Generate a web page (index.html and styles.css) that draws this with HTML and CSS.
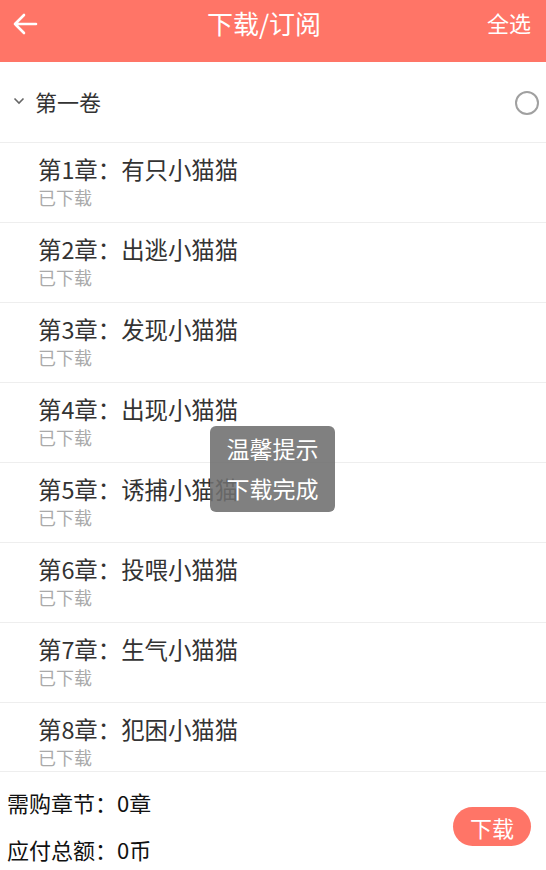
FILE: index.html
```html
<!DOCTYPE html>
<html lang="zh">
<head>
<meta charset="utf-8">
<title>下载/订阅</title>
<link rel="stylesheet" href="styles.css">
</head>
<body>
<div class="app">
  <header class="topbar">
    <svg class="back" width="26" height="22" viewBox="0 0 26 22"><path d="M24 11H3M12 2L3 11l9 9" fill="none" stroke="#fff" stroke-width="2.6" stroke-linecap="round" stroke-linejoin="round"/></svg>
    <h1 class="title">下载/订阅</h1>
    <span class="select-all">全选</span>
  </header>
  <main class="list">
    <div class="volume">
      <svg class="chev" width="12" height="8" viewBox="0 0 12 8"><path d="M1.5 1.5L6 6l4.5-4.5" fill="none" stroke="#666" stroke-width="1.6"/></svg>
      <span class="volume-name">第一卷</span>
      <span class="radio"></span>
    </div>
    <div class="chapter"><div class="ch-title">第1章：有只小猫猫</div><div class="ch-state">已下载</div></div>
    <div class="chapter"><div class="ch-title">第2章：出逃小猫猫</div><div class="ch-state">已下载</div></div>
    <div class="chapter"><div class="ch-title">第3章：发现小猫猫</div><div class="ch-state">已下载</div></div>
    <div class="chapter"><div class="ch-title">第4章：出现小猫猫</div><div class="ch-state">已下载</div></div>
    <div class="chapter"><div class="ch-title">第5章：诱捕小猫猫</div><div class="ch-state">已下载</div></div>
    <div class="chapter"><div class="ch-title">第6章：投喂小猫猫</div><div class="ch-state">已下载</div></div>
    <div class="chapter"><div class="ch-title">第7章：生气小猫猫</div><div class="ch-state">已下载</div></div>
    <div class="chapter"><div class="ch-title">第8章：犯困小猫猫</div><div class="ch-state">已下载</div></div>
  </main>
  <footer class="footer">
    <div class="totals">
      <div class="line">需购章节：0章</div>
      <div class="line">应付总额：0币</div>
    </div>
    <button class="dl-btn">下载</button>
  </footer>
  <div class="toast">
    <div>温馨提示</div>
    <div>下载完成</div>
  </div>
</div>
</body>
</html>
```
FILE: styles.css
```css
* { box-sizing: border-box; }
html, body { margin: 0; padding: 0; }
body {
  width: 546px;
  height: 870px;
  overflow: hidden;
  background: #fff;
  font-family: "Noto Sans CJK SC", "Noto Sans", sans-serif;
  color: #333;
}
.app {
  position: relative;
  height: 870px;
  display: flex;
  flex-direction: column;
}
.topbar {
  height: 62px;
  flex: 0 0 62px;
  background: #ff7567;
  display: flex;
  align-items: center;
  justify-content: space-between;
  padding: 0 15px 0 12px;
  position: relative;
}
.back { display: block; margin-top: -14px; }
.title {
  position: absolute;
  left: 0; right: 18px;
  margin: 0;
  text-align: center;
  color: #fff;
  font-size: 26px;
  font-weight: normal;
  line-height: 62px;
  top: -8px;
  pointer-events: none;
}
.select-all {
  color: #fff;
  font-size: 22px;
  margin-top: -18px;
}
.list {
  flex: 1 1 auto;
  min-height: 0;
  overflow: hidden;
}
.volume {
  height: 81px;
  border-bottom: 1px solid #eee;
  display: flex;
  align-items: center;
  padding: 0 7px 0 13px;
}
.chev { display: block; margin-top: -2px; }
.volume-name {
  font-size: 22px;
  margin-left: 10px;
  flex: 1;
  color: #333;
  margin-top: -2px;
}
.radio {
  width: 24px;
  height: 24px;
  border: 2px solid #a0a0a0;
  border-radius: 50%;
  margin-top: 1px;
}
.chapter {
  height: 80px;
  border-bottom: 1px solid #eee;
  padding: 12px 0 0 38px;
}
.ch-title {
  font-size: 23.4px;
  line-height: 28px;
  color: #333;
}
.ch-state {
  font-size: 18px;
  line-height: 28px;
  color: #aaa;
}
.footer {
  flex: 0 0 99px;
  min-height: 0;
  overflow: hidden;
  border-top: 1px solid #eee;
  display: flex;
  align-items: flex-start;
  justify-content: space-between;
  padding: 0 15px 0 7px;
}
.totals { padding-top: 7px; }
.line {
  font-size: 22px;
  line-height: 47px;
  color: #111;
}
.dl-btn {
  width: 78px;
  height: 39px;
  border: none;
  border-radius: 20px;
  background: #ff7567;
  color: #fff;
  font-family: inherit;
  font-size: 22px;
  padding: 0;
  margin-top: 35px;
}
.toast {
  position: absolute;
  left: 210px;
  top: 426px;
  width: 125px;
  height: 86px;
  background: rgba(110, 110, 110, 0.88);
  border-radius: 6px;
  color: #fff;
  font-size: 23px;
  line-height: 40px;
  text-align: center;
  padding-top: 2px;
}
```
